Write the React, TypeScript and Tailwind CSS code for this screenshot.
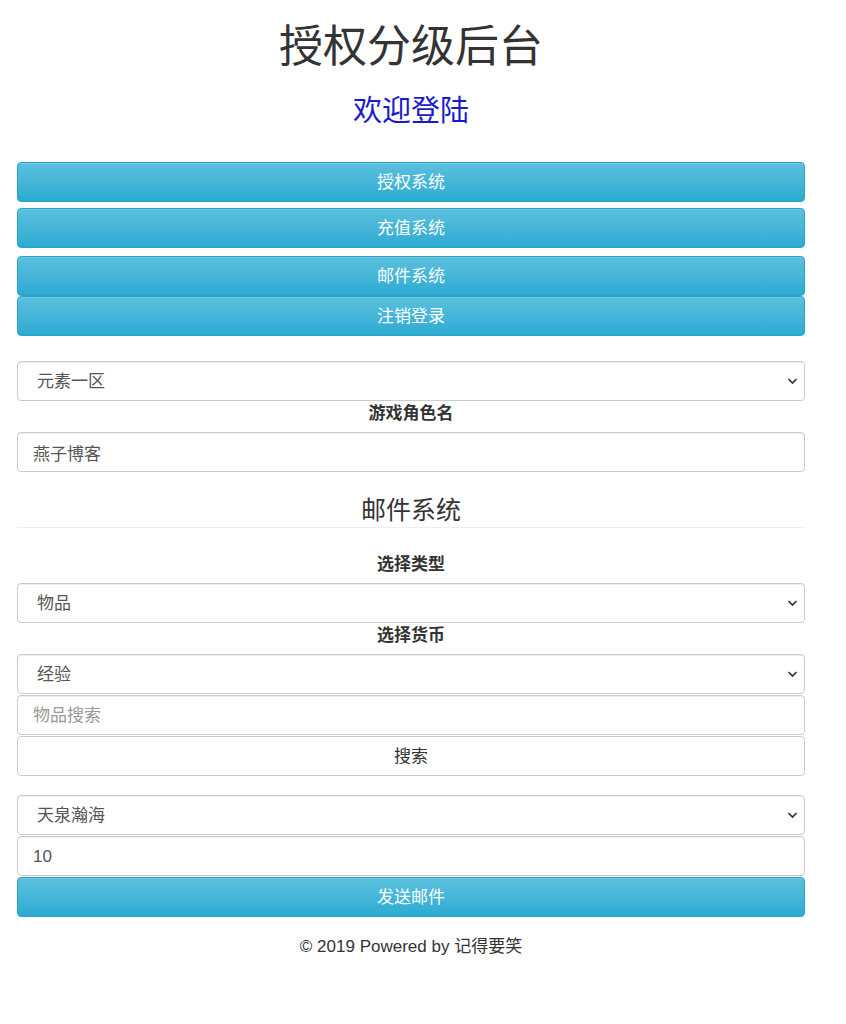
import React from "react";

const font = { fontFamily: '"Liberation Sans", "Noto Sans CJK SC", sans-serif' };

function Chevron() {
  return (
    <svg
      className="pointer-events-none absolute right-[7px] top-1/2 -translate-y-1/2"
      width="11"
      height="7"
      viewBox="0 0 11 7"
    >
      <path d="M1.5 1.5 L5.5 5.5 L9.5 1.5" fill="none" stroke="#333" strokeWidth="1.7" />
    </svg>
  );
}

function Select({ value, className = "" }: { value: string; className?: string }) {
  return (
    <div className={"relative h-[40px] " + className}>
      <select
        defaultValue={value}
        className="h-full w-full appearance-none rounded-[4px] border border-[#ccc] bg-white pl-[19px] pr-8 pt-[1px] text-[17px] text-[#555] shadow-[inset_0_1px_1px_rgba(0,0,0,0.075)] outline-none"
        style={font}
      >
        <option>{value}</option>
      </select>
      <Chevron />
    </div>
  );
}

function Input({
  value,
  placeholder,
  className = "",
}: {
  value?: string;
  placeholder?: string;
  className?: string;
}) {
  return (
    <input
      defaultValue={value}
      placeholder={placeholder}
      className={
        "block h-[40px] w-full rounded-[4px] border border-[#ccc] bg-white px-[15px] pt-[1px] text-[17px] text-[#555] placeholder:text-[#999] shadow-[inset_0_1px_1px_rgba(0,0,0,0.075)] outline-none " +
        className
      }
      style={font}
    />
  );
}

function InfoBtn({ label, className = "" }: { label: string; className?: string }) {
  return (
    <button
      className={
        "block h-[40px] w-full rounded-[4px] border border-[#28a4c9] bg-gradient-to-b from-[#5bc0de] to-[#2aabd2] pt-[2px] text-[17px] text-white shadow-[inset_0_1px_0_rgba(255,255,255,0.15)] " +
        className
      }
      style={font}
    >
      {label}
    </button>
  );
}

function Label({ text, className = "" }: { text: string; className?: string }) {
  return (
    <div
      className={"text-center text-[17px] font-bold leading-[22px] text-[#333] " + className}
      style={font}
    >
      {text}
    </div>
  );
}

export default function App() {
  return (
    <div className="min-h-[1024px] w-full bg-white" style={font}>
      <div className="ml-[17px] w-[788px]">
        <h1 className="pt-[23px] text-center text-[44px] font-normal leading-[48px] text-[#333]">
          授权分级后台
        </h1>
        <div className="mt-[24px] text-center text-[29px] leading-[32px] text-[#1a1acd]">
          欢迎登陆
        </div>

        <InfoBtn label="授权系统" className="mt-[35px]" />
        <InfoBtn label="充值系统" className="mt-[6px]" />
        <InfoBtn label="邮件系统" className="mt-[8px]" />
        <InfoBtn label="注销登录" />

        <Select value="元素一区" className="mt-[25px]" />
        <Label text="游戏角色名" className="mt-[2px]" />
        <Input value="燕子博客" className="mt-[7px]" />

        <div className="mt-[24px] text-center text-[25px] leading-[28px] text-[#333]">
          邮件系统
        </div>
        <div className="mt-[3px] h-px w-full bg-[#eee]" />

        <Label text="选择类型" className="mt-[26px]" />
        <Select value="物品" className="mt-[7px]" />
        <Label text="选择货币" className="mt-[2px]" />
        <Select value="经验" className="mt-[7px]" />
        <Input placeholder="物品搜索" className="mt-[1px]" />
        <button
          className="mt-[1px] block h-[40px] w-full rounded-[4px] border border-[#ccc] bg-white pt-[1px] text-[17px] text-[#333]"
          style={font}
        >
          搜索
        </button>

        <Select value="天泉瀚海" className="mt-[19px]" />
        <Input value="10" className="mt-[1px]" />
        <InfoBtn label="发送邮件" className="mt-[1px] h-[39px]" />

        <div className="mt-[19px] text-center text-[17px] leading-[22px] text-[#333]">
          © 2019 Powered by 记得要笑
        </div>
      </div>
    </div>
  );
}
